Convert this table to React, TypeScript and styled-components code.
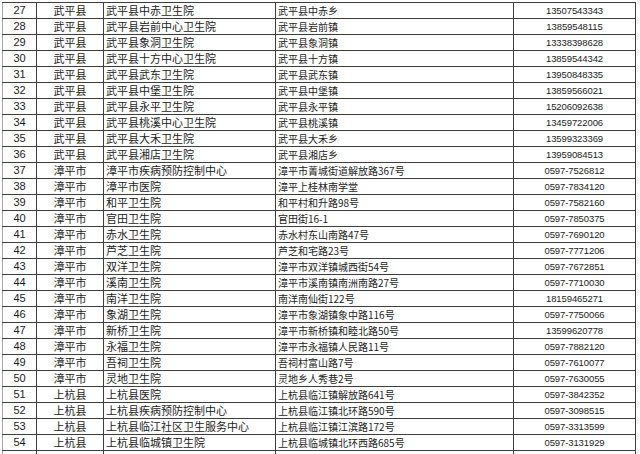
import { createGlobalStyle, styled } from 'styled-components';

const GlobalStyle = createGlobalStyle`
  html, body {
    margin: 0;
    padding: 0;
    background: #ffffff;
    overflow: hidden;
  }
  body {
    width: 640px;
    height: 454px;
  }
`;

type Row = [number, string, string, string, string];

const rows: Row[] = [
  [27, '武平县', '武平县中赤卫生院', '武平县中赤乡', '13507543343'],
  [28, '武平县', '武平县岩前中心卫生院', '武平县岩前镇', '13859548115'],
  [29, '武平县', '武平县象洞卫生院', '武平县象洞镇', '13338398628'],
  [30, '武平县', '武平县十方中心卫生院', '武平县十方镇', '13859544342'],
  [31, '武平县', '武平县武东卫生院', '武平县武东镇', '13950848335'],
  [32, '武平县', '武平县中堡卫生院', '武平县中堡镇', '13859566021'],
  [33, '武平县', '武平县永平卫生院', '武平县永平镇', '15206092638'],
  [34, '武平县', '武平县桃溪中心卫生院', '武平县桃溪镇', '13459722006'],
  [35, '武平县', '武平县大禾卫生院', '武平县大禾乡', '13599323369'],
  [36, '武平县', '武平县湘店卫生院', '武平县湘店乡', '13959084513'],
  [37, '漳平市', '漳平市疾病预防控制中心', '漳平市菁城街道解放路367号', '0597-7526812'],
  [38, '漳平市', '漳平市医院', '漳平上桂林南学堂', '0597-7834120'],
  [39, '漳平市', '和平卫生院', '和平村和升路98号', '0597-7582160'],
  [40, '漳平市', '官田卫生院', '官田街16-1', '0597-7850375'],
  [41, '漳平市', '赤水卫生院', '赤水村东山南路47号', '0597-7690120'],
  [42, '漳平市', '芦芝卫生院', '芦芝和宅路23号', '0597-7771206'],
  [43, '漳平市', '双洋卫生院', '漳平市双洋镇城西街54号', '0597-7672851'],
  [44, '漳平市', '溪南卫生院', '漳平市溪南镇南洲南路27号', '0597-7710030'],
  [45, '漳平市', '南洋卫生院', '南洋南仙街122号', '18159465271'],
  [46, '漳平市', '象湖卫生院', '漳平市象湖镇象中路116号', '0597-7750066'],
  [47, '漳平市', '新桥卫生院', '漳平市新桥镇和睦北路50号', '13599620778'],
  [48, '漳平市', '永福卫生院', '漳平市永福镇人民路11号', '0597-7882120'],
  [49, '漳平市', '吾祠卫生院', '吾祠村富山路7号', '0597-7610077'],
  [50, '漳平市', '灵地卫生院', '灵地乡人秀巷2号', '0597-7630055'],
  [51, '上杭县', '上杭县医院', '上杭县临江镇解放路641号', '0597-3842352'],
  [52, '上杭县', '上杭县疾病预防控制中心', '上杭县临江镇北环路590号', '0597-3098515'],
  [53, '上杭县', '上杭县临江社区卫生服务中心', '上杭县临江镇江滨路172号', '0597-3313599'],
  [54, '上杭县', '上杭县临城镇卫生院', '上杭县临城镇北环西路685号', '0597-3131929'],
];

const Frame = styled.div`
  padding: 2px 0 0 2px;
`;

const Sheet = styled.table`
  border-collapse: collapse;
  table-layout: fixed;
  width: 633px;
  color: #1c1c1c;
`;

const Line = styled.tr`
  height: 16px;
`;

type Kind = 'index' | 'region' | 'name' | 'address' | 'phone';

const fonts: Record<Kind, string> = {
  index: `font-family: "Liberation Sans", Arial, sans-serif; font-size: 11px;`,
  region: `font-family: "Noto Sans CJK SC", sans-serif; font-size: 11px;`,
  name: `font-family: "Noto Sans CJK SC", sans-serif; font-size: 11px;`,
  address: `font-family: "Noto Sans CJK SC", sans-serif; font-size: 10px;`,
  phone: `font-family: "Liberation Sans", Arial, sans-serif; font-size: 9.5px; letter-spacing: -0.1px;`,
};

const Cell = styled.td<{ $kind: Kind }>`
  height: 15px;
  padding: 0 2px;
  border: 1px solid #3e3e3e;
  border-left-color: ${({ $kind }) => ($kind === 'index' ? '#a8a8a8' : '#3e3e3e')};
  white-space: nowrap;
  overflow: hidden;
  line-height: 15px;
  vertical-align: middle;
  text-align: ${({ $kind }) => ($kind === 'name' || $kind === 'address' ? 'left' : 'center')};
  ${({ $kind }) => fonts[$kind]}
`;

export default function App() {
  return (
    <>
      <GlobalStyle />
      <Frame>
        <Sheet>
          <colgroup>
            <col style={{ width: 34 }} />
            <col style={{ width: 67 }} />
            <col style={{ width: 172 }} />
            <col style={{ width: 238 }} />
            <col style={{ width: 122 }} />
          </colgroup>
          <tbody>
            {rows.map(([n, region, name, address, phone]) => (
              <Line key={n}>
                <Cell $kind="index">{n}</Cell>
                <Cell $kind="region">{region}</Cell>
                <Cell $kind="name">{name}</Cell>
                <Cell $kind="address">{address}</Cell>
                <Cell $kind="phone">{phone}</Cell>
              </Line>
            ))}
            <Line>
              <Cell $kind="index" />
              <Cell $kind="region" />
              <Cell $kind="name" />
              <Cell $kind="address" />
              <Cell $kind="phone" />
            </Line>
          </tbody>
        </Sheet>
      </Frame>
    </>
  );
}
